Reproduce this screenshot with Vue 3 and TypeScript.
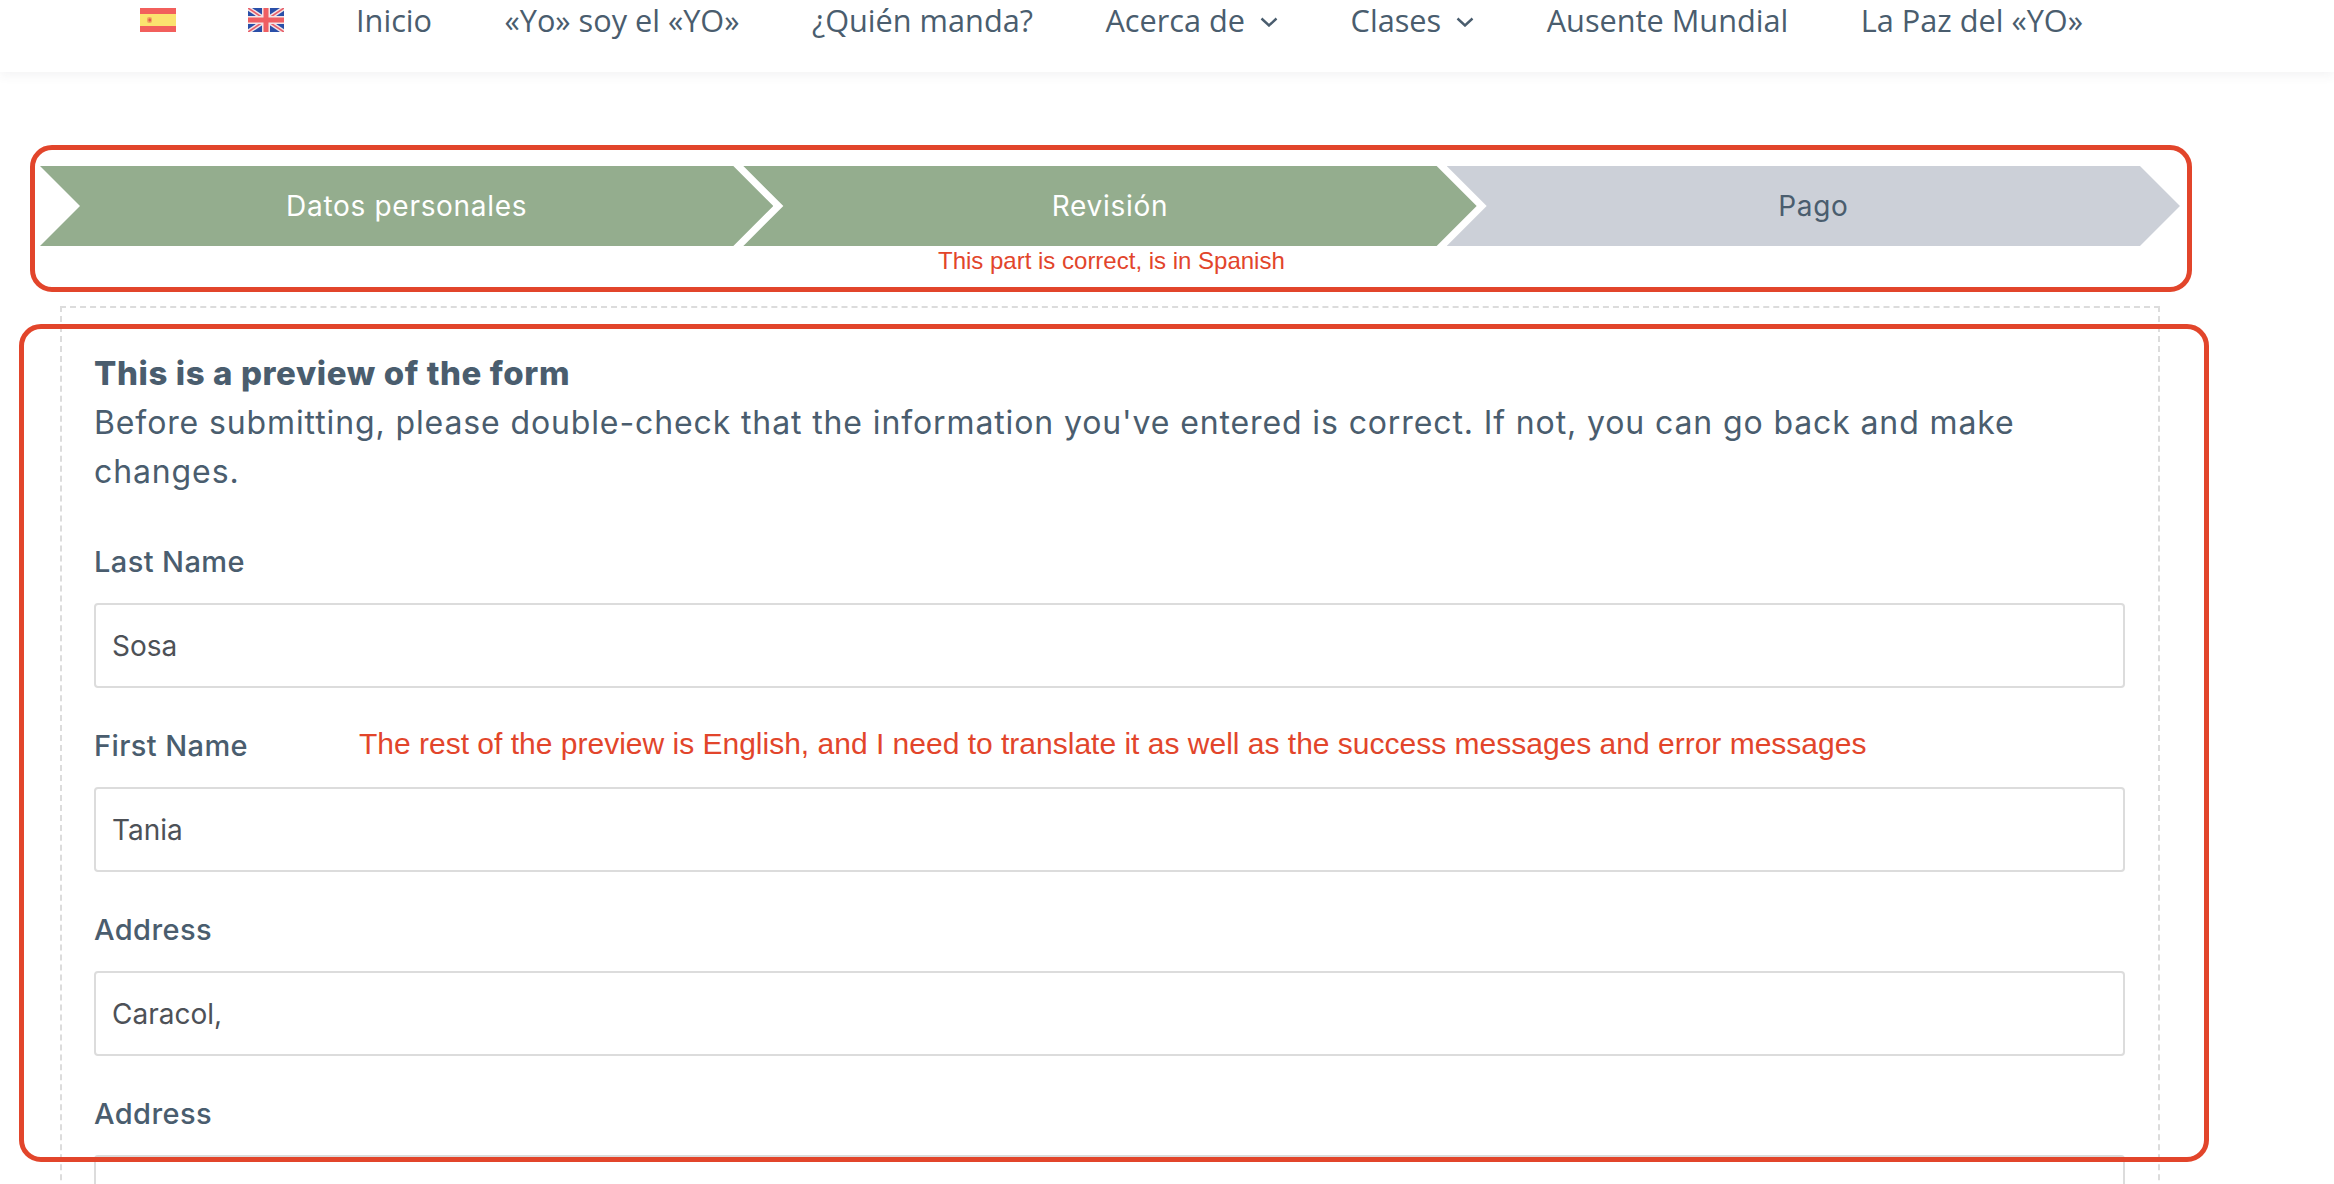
<script setup lang="ts">
interface Step { label: string; done: boolean }
const links = [
  { label: 'Inicio', caret: false },
  { label: '«Yo» soy el «YO»', caret: false },
  { label: '¿Quién manda?', caret: false },
  { label: 'Acerca de', caret: true },
  { label: 'Clases', caret: true },
  { label: 'Ausente Mundial', caret: false },
  { label: 'La Paz del «YO»', caret: false },
]
const steps: Step[] = [
  { label: 'Datos personales', done: true },
  { label: 'Revisión', done: true },
  { label: 'Pago', done: false },
]
const fields = [
  { label: 'Last Name', value: 'Sosa' },
  { label: 'First Name', value: 'Tania' },
  { label: 'Address', value: 'Caracol,' },
  { label: 'Address', value: '' },
]
</script>

<template>
  <div class="page">
    <header class="nav">
      <svg class="flag" viewBox="0 0 36 24" aria-label="Español">
        <rect width="36" height="24" fill="#f25f5c" />
        <rect y="6" width="36" height="12" fill="#fbe36f" />
        <rect x="7" y="9" width="5" height="6" rx="2" fill="#f0a860" />
        <rect x="8.5" y="10.5" width="2.5" height="3" rx="1" fill="#e8574f" />
      </svg>
      <svg class="flag" viewBox="0 0 36 24" aria-label="English">
        <rect width="36" height="24" fill="#2a4fa8" />
        <path d="M0 0 36 24M36 0 0 24" stroke="#f3e4e6" stroke-width="4.5" />
        <path d="M0 0 36 24M36 0 0 24" stroke="#e8606a" stroke-width="1.6" />
        <path d="M18 0V24M0 12H36" stroke="#f3e4e6" stroke-width="8" />
        <path d="M18 0V24M0 12H36" stroke="#ef5f62" stroke-width="5" />
      </svg>
      <a v-for="l in links" :key="l.label" class="link">
        {{ l.label }}
        <svg v-if="l.caret" class="caret" viewBox="0 0 18 10">
          <path d="M1.5 1.5 9 8.5 16.5 1.5" fill="none" stroke="currentColor" stroke-width="2.4" />
        </svg>
      </a>
    </header>

    <main class="content">
      <div class="steps">
        <div v-for="s in steps" :key="s.label" class="step" :class="{ done: s.done }">{{ s.label }}</div>
      </div>

      <section class="panel">
        <h2 class="title">This is a preview of the form</h2>
        <p class="intro">Before submitting, please double-check that the information you've entered is correct. If not, you can go back and make changes.</p>
        <div v-for="(f, i) in fields" :key="i" class="field">
          <label class="label">{{ f.label }}</label>
          <div class="input">{{ f.value }}</div>
        </div>
      </section>
    </main>

    <div class="mark mark-top"></div>
    <div class="mark mark-form"></div>
    <span class="note note-top">This part is correct, is in Spanish</span>
    <span class="note note-form">The rest of the preview is English, and I need to translate it as well as the success messages and error messages</span>
  </div>
</template>

<style>
html, body { margin: 0; background: #fff; overflow: hidden; }
</style>

<style scoped>
.page {
  position: relative;
  width: 2334px;
  height: 1184px;
  overflow: hidden;
  background: #fff;
  font-family: Inter, "Liberation Sans", sans-serif;
  color: #4a5d6e;
}
.nav {
  box-sizing: border-box;
  height: 72px;
  display: flex;
  align-items: flex-start;
  padding-left: 140px;
  background: #fff;
  box-shadow: 0 4px 10px rgba(60, 70, 90, 0.06);
}
.flag { width: 36px; height: 24px; margin: 8px 72px 0 0; flex: none; }
.link {
  display: flex;
  align-items: center;
  gap: 15px;
  height: 40px;
  margin-right: 72.5px;
  font-family: "Open Sans", "Noto Sans", sans-serif;
  font-size: 30.7px;
  line-height: 40px;
  color: #4a5d6e;
  white-space: nowrap;
}
.caret { width: 18px; height: 10px; margin-top: 4px; }
.content { padding: 94px 0 0 40px; }
.steps { display: flex; width: 2140px; }
.step {
  flex: 0 0 733.33px;
  height: 80px;
  margin-right: -30px;
  display: flex;
  align-items: center;
  justify-content: center;
  font-size: 28px;
  letter-spacing: 0.7px;
  background: #ccd0d8;
  color: #4a5d6e;
  clip-path: polygon(0 0, calc(100% - 40px) 0, 100% 50%, calc(100% - 40px) 100%, 0 100%, 40px 50%);
}
.step.done { background: #94ad8e; color: #fff; }
.panel {
  box-sizing: border-box;
  width: 2100px;
  margin: 60px 0 0 20px;
  padding: 40px 33px 0 32px;
  border: 2px dashed #dcdcdc;
  border-bottom: 0;
}
.title {
  margin: 0;
  font-size: 33px;
  line-height: 50px;
  font-weight: 800;
  letter-spacing: 0.6px;
  color: #4a5d6e;
}
.intro {
  margin: 0 0 46px;
  font-size: 32px;
  line-height: 49px;
  letter-spacing: 0.88px;
  color: #4a5d6e;
}
.field { margin-top: 38px; }
.label {
  display: block;
  font-size: 29px;
  line-height: 40px;
  font-weight: 500;
  letter-spacing: 0.4px;
  color: #4a5d6e;
  margin-bottom: 21px;
}
.input {
  box-sizing: border-box;
  height: 85px;
  padding: 0 16px;
  display: flex;
  align-items: center;
  border: 2px solid #dcdcdc;
  border-radius: 4px;
  font-size: 28px;
  color: #4d5157;
}
.mark {
  position: absolute;
  box-sizing: border-box;
  border: 5px solid #e2452b;
  border-radius: 22px;
  pointer-events: none;
}
.mark-top { left: 30px; top: 145px; width: 2162px; height: 147px; }
.mark-form { left: 19px; top: 324px; width: 2190px; height: 838px; }
.note {
  position: absolute;
  font-family: "Liberation Sans", Arial, sans-serif;
  color: #e2452b;
  white-space: nowrap;
}
.note-top { left: 938px; top: 247px; font-size: 24px; line-height: 28px; }
.note-form { left: 359px; top: 726px; font-size: 30px; line-height: 36px; }
</style>
